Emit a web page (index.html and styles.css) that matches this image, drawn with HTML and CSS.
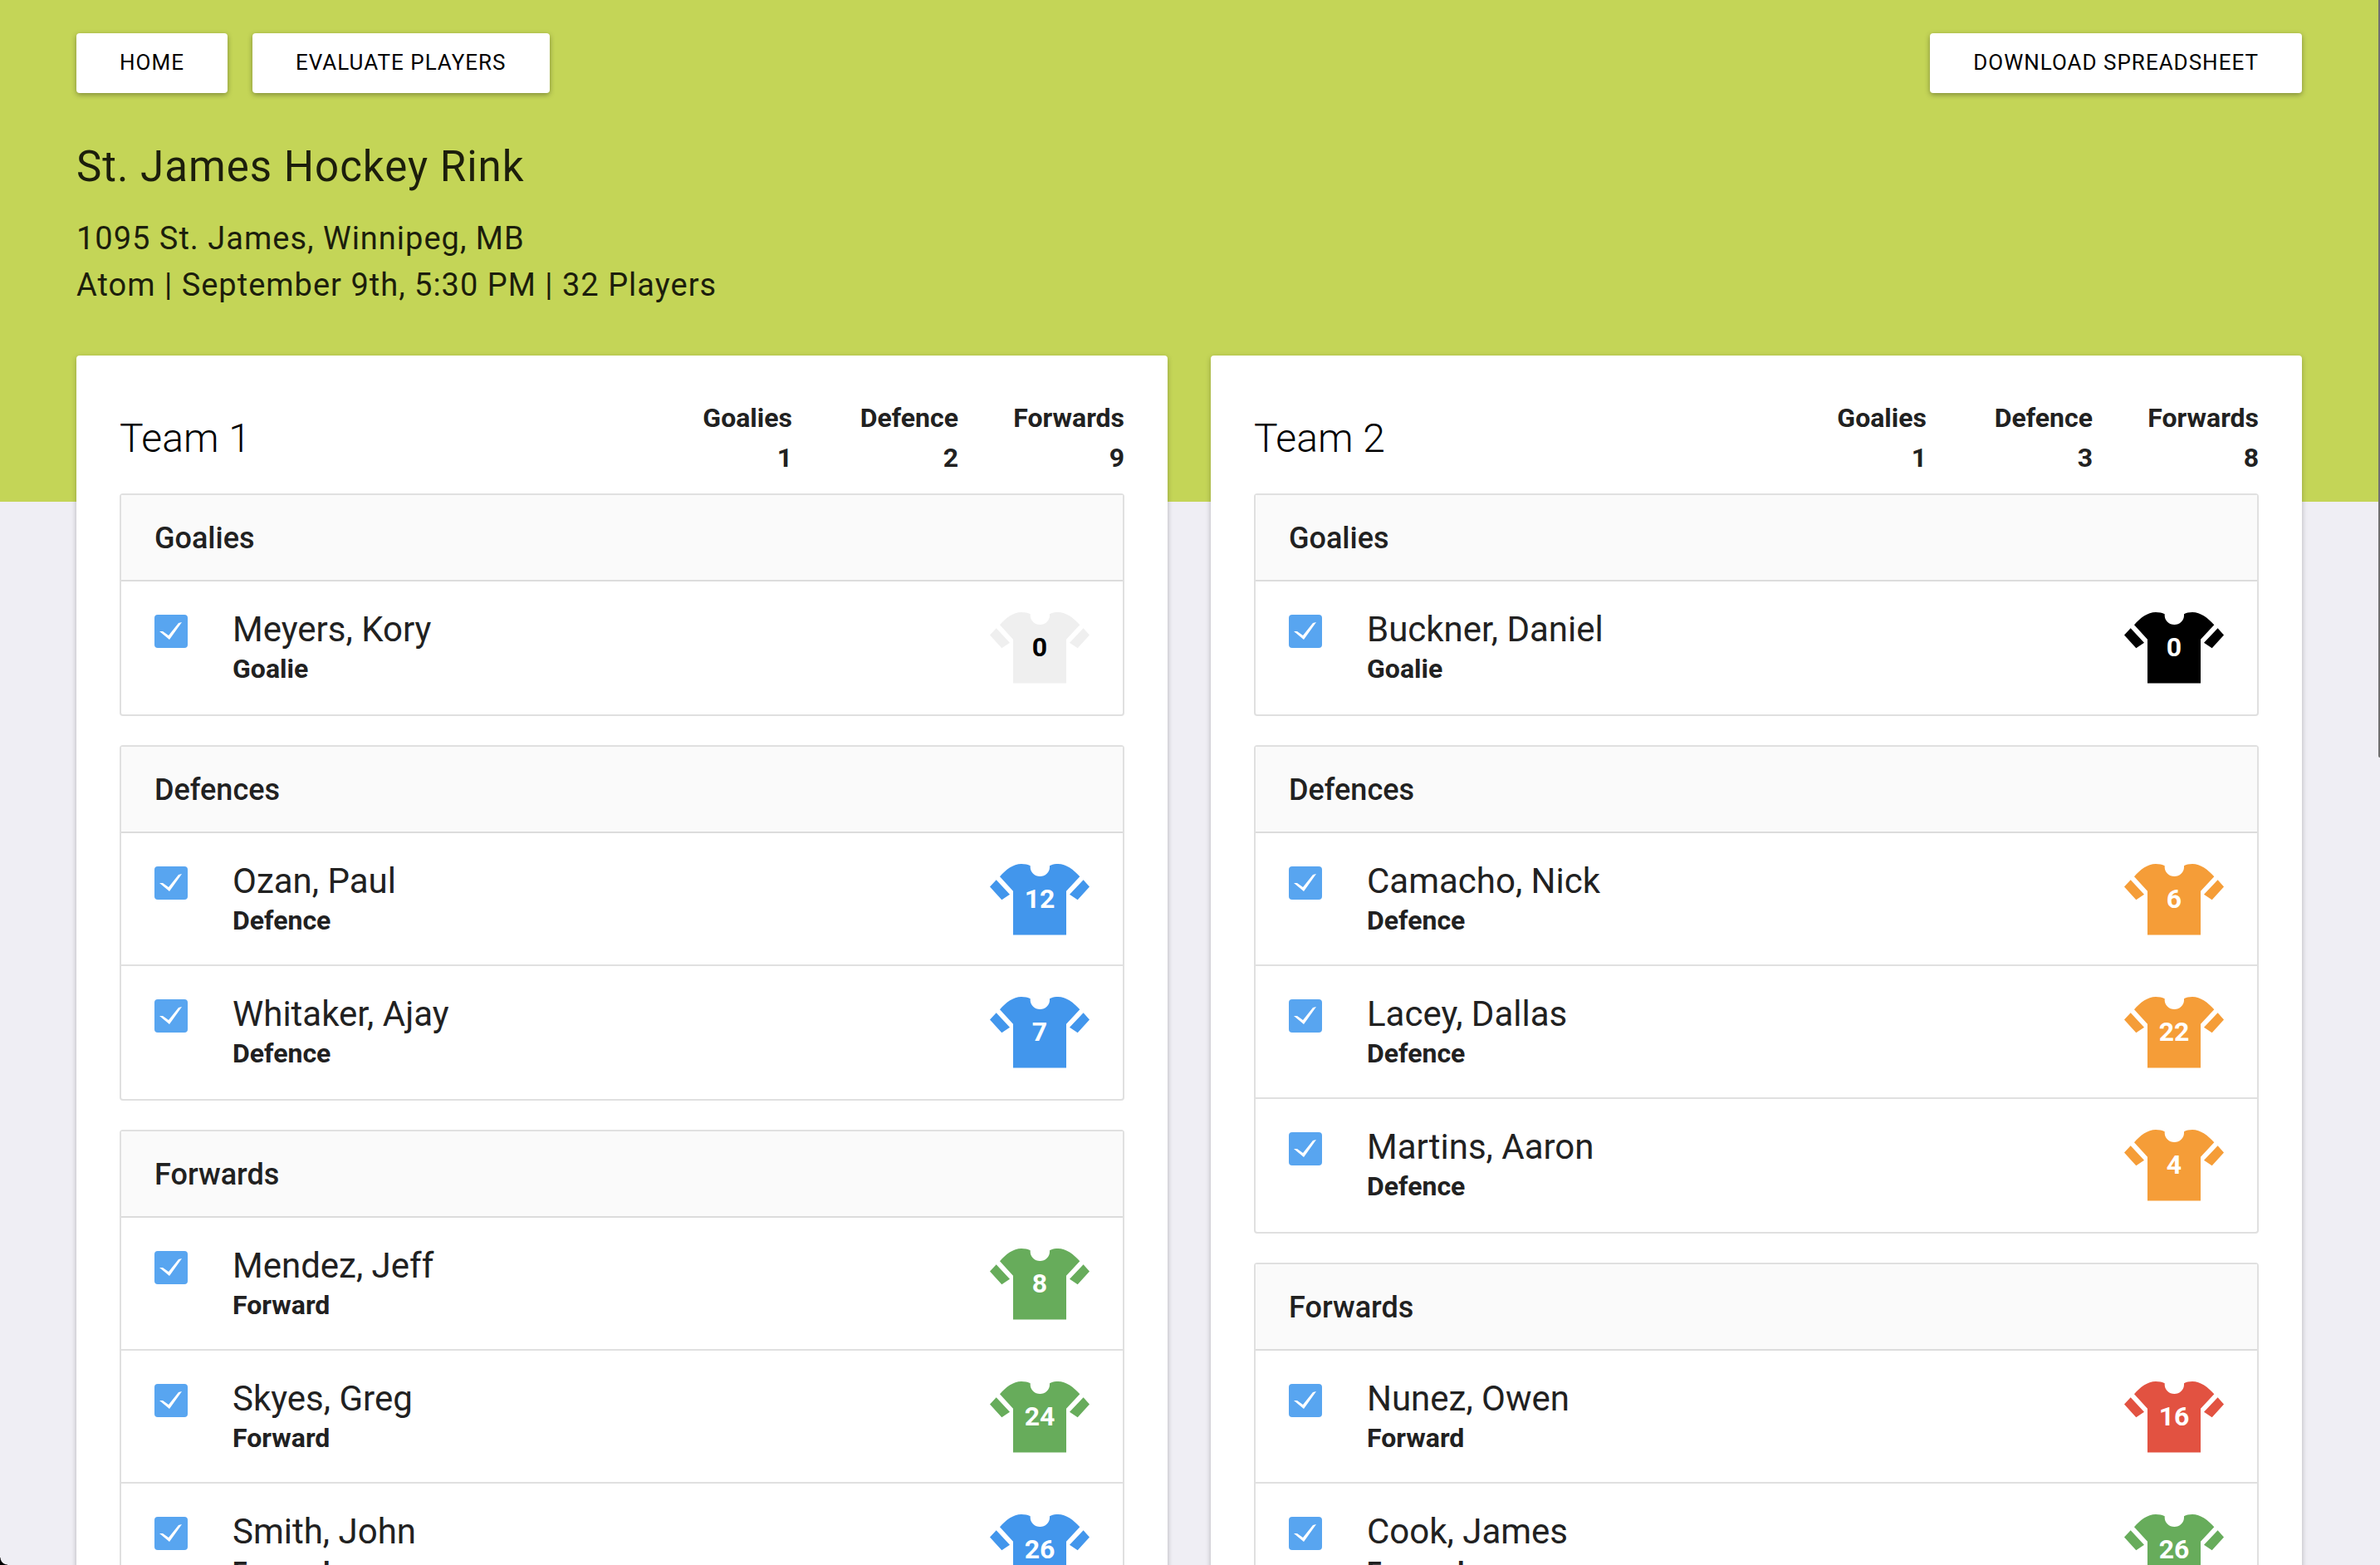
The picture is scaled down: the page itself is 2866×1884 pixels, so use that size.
FILE: index.html
```html
<!DOCTYPE html>
<html lang="en">
<head>
<meta charset="utf-8">
<title>St. James Hockey Rink</title>
<link rel="stylesheet" href="styles.css">
</head>
<body>
<svg class="sprite" aria-hidden="true">
  <symbol id="jersey" viewBox="0 0 120 86">
    <path d="M12 15.3C19 7 28 0 38 0c4 0 8 .8 10.700 2.300V4a11.300 10.700 0 0 0 23.300 0V2.300C74.500.8 78 0 82 0c10 0 19 7 26.300 15.300L92 32.700V85.500H28V32.700Z"/>
    <path d="M0 27.500 7.700 19.300 24 36.700 14.300 43.200ZM120 27.500 112.600 19.300 96 36.700 105.700 43.200Z"/>
  </symbol>
</svg>

<header class="hero">
  <nav class="toolbar">
    <button type="button" class="btn">HOME</button>
    <button type="button" class="btn">EVALUATE PLAYERS</button>
    <button type="button" class="btn btn-end">DOWNLOAD SPREADSHEET</button>
  </nav>
  <h1 class="venue">St. James Hockey Rink</h1>
  <p class="details">1095 St. James, Winnipeg, MB<br>Atom | September 9th, 5:30 PM | 32 Players</p>
</header>

<main class="teams">
  <section class="team">
    <div class="team-head">
      <h2 class="team-name">Team 1</h2>
      <dl class="counts">
        <div><dt>Goalies</dt><dd>1</dd></div>
        <div><dt>Defence</dt><dd>2</dd></div>
        <div><dt>Forwards</dt><dd>9</dd></div>
      </dl>
    </div>
    <section class="group">
      <h3 class="group-title">Goalies</h3>
      <label class="player"><input type="checkbox" class="check" checked><span class="who"><span class="name">Meyers, Kory</span><span class="role">Goalie</span></span><span class="jersey white"><svg aria-hidden="true"><use href="#jersey"/></svg><span class="number">0</span></span></label>
    </section>
    <section class="group">
      <h3 class="group-title">Defences</h3>
      <label class="player"><input type="checkbox" class="check" checked><span class="who"><span class="name">Ozan, Paul</span><span class="role">Defence</span></span><span class="jersey blue"><svg aria-hidden="true"><use href="#jersey"/></svg><span class="number">12</span></span></label>
      <label class="player"><input type="checkbox" class="check" checked><span class="who"><span class="name">Whitaker, Ajay</span><span class="role">Defence</span></span><span class="jersey blue"><svg aria-hidden="true"><use href="#jersey"/></svg><span class="number">7</span></span></label>
    </section>
    <section class="group">
      <h3 class="group-title">Forwards</h3>
      <label class="player"><input type="checkbox" class="check" checked><span class="who"><span class="name">Mendez, Jeff</span><span class="role">Forward</span></span><span class="jersey green"><svg aria-hidden="true"><use href="#jersey"/></svg><span class="number">8</span></span></label>
      <label class="player"><input type="checkbox" class="check" checked><span class="who"><span class="name">Skyes, Greg</span><span class="role">Forward</span></span><span class="jersey green"><svg aria-hidden="true"><use href="#jersey"/></svg><span class="number">24</span></span></label>
      <label class="player"><input type="checkbox" class="check" checked><span class="who"><span class="name">Smith, John</span><span class="role">Forward</span></span><span class="jersey blue"><svg aria-hidden="true"><use href="#jersey"/></svg><span class="number">26</span></span></label>
    </section>
  </section>

  <section class="team">
    <div class="team-head">
      <h2 class="team-name">Team 2</h2>
      <dl class="counts">
        <div><dt>Goalies</dt><dd>1</dd></div>
        <div><dt>Defence</dt><dd>3</dd></div>
        <div><dt>Forwards</dt><dd>8</dd></div>
      </dl>
    </div>
    <section class="group">
      <h3 class="group-title">Goalies</h3>
      <label class="player"><input type="checkbox" class="check" checked><span class="who"><span class="name">Buckner, Daniel</span><span class="role">Goalie</span></span><span class="jersey black"><svg aria-hidden="true"><use href="#jersey"/></svg><span class="number">0</span></span></label>
    </section>
    <section class="group">
      <h3 class="group-title">Defences</h3>
      <label class="player"><input type="checkbox" class="check" checked><span class="who"><span class="name">Camacho, Nick</span><span class="role">Defence</span></span><span class="jersey orange"><svg aria-hidden="true"><use href="#jersey"/></svg><span class="number">6</span></span></label>
      <label class="player"><input type="checkbox" class="check" checked><span class="who"><span class="name">Lacey, Dallas</span><span class="role">Defence</span></span><span class="jersey orange"><svg aria-hidden="true"><use href="#jersey"/></svg><span class="number">22</span></span></label>
      <label class="player"><input type="checkbox" class="check" checked><span class="who"><span class="name">Martins, Aaron</span><span class="role">Defence</span></span><span class="jersey orange"><svg aria-hidden="true"><use href="#jersey"/></svg><span class="number">4</span></span></label>
    </section>
    <section class="group">
      <h3 class="group-title">Forwards</h3>
      <label class="player"><input type="checkbox" class="check" checked><span class="who"><span class="name">Nunez, Owen</span><span class="role">Forward</span></span><span class="jersey red"><svg aria-hidden="true"><use href="#jersey"/></svg><span class="number">16</span></span></label>
      <label class="player"><input type="checkbox" class="check" checked><span class="who"><span class="name">Cook, James</span><span class="role">Forward</span></span><span class="jersey green"><svg aria-hidden="true"><use href="#jersey"/></svg><span class="number">26</span></span></label>
    </section>
  </section>
</main>
<div class="scroll-thumb"></div>
<div class="window-corner"></div>
</body>
</html>
```
FILE: styles.css
```css
* { box-sizing: border-box; margin: 0; padding: 0; }

body {
  height: 100vh;
  overflow: hidden;
  background: #efeef4;
  color: #212121;
  font-family: Roboto, "Liberation Sans", sans-serif;
}

.sprite { position: absolute; width: 0; height: 0; }

/* Header band; the team cards overlap its lower part */
.hero {
  padding: 40px 94px 233px 92px;
  background: #c4d557;
  color: #1c1e0c;
}

.toolbar { display: flex; gap: 30px; }

.btn {
  height: 72px;
  padding: 0 52px 2px;
  border: 0;
  border-radius: 4px;
  background: #fff;
  color: #000;
  font: 400 26px/32px Roboto, "Liberation Sans", sans-serif;
  letter-spacing: 1px;
  box-shadow: 0 2px 6px rgba(0, 0, 0, .35);
}

.btn-end { margin-left: auto; }

.venue {
  margin-top: 57px;
  font-size: 51px;
  font-weight: 400;
  line-height: 64px;
  letter-spacing: 1px;
}

.details {
  margin-top: 26px;
  font-size: 38px;
  line-height: 56px;
  letter-spacing: 1px;
}

.teams {
  display: grid;
  grid-template-columns: 1fr 1fr;
  gap: 52px;
  margin-top: -176px;
  padding: 0 94px 0 92px;
}

.team {
  padding: 51px 52px 52px;
  border-radius: 4px;
  background: #fff;
  box-shadow: 0 2px 6px rgba(0, 0, 0, .25);
}

.team-head {
  display: flex;
  justify-content: space-between;
  align-items: center;
  margin-bottom: 18px;
}

.team-name {
  color: #000;
  font-size: 48px;
  font-weight: 300;
  line-height: 56px;
}

.counts {
  display: grid;
  grid-template-columns: repeat(3, 200px);
  padding-bottom: 1px;
  font-size: 32px;
  font-weight: 700;
  line-height: 48px;
  text-align: right;
}

.group {
  border: 2px solid #e0e0e0;
  border-radius: 4px;
}

.group + .group { margin-top: 35px; }

.group-title {
  padding: 2px 40px 0;
  border-bottom: 2px solid #dcdcdc;
  background: #fafafa;
  font-size: 36px;
  font-weight: 500;
  line-height: 100px;
}

.player {
  display: flex;
  align-items: flex-start;
  height: 160px;
  padding: 34px 40px 0;
  border-bottom: 2px solid #e0e0e0;
}

.player:last-child { border-bottom-color: transparent; }

.check {
  appearance: none;
  width: 40px;
  height: 40px;
  margin: 6px 54px 0 0;
  border-radius: 4px;
  background: #58a5f0;
}

.check::before {
  content: "";
  display: block;
  width: 40px;
  height: 40px;
}

.check:checked::before {
  background: #fff;
  clip-path: polygon(6px 20px, 10px 20px, 17px 25px, 29px 10px, 33px 9px, 18px 30px);
}

.who { flex: 1; display: flex; flex-direction: column; }

.name { font-size: 42px; line-height: 48px; }

.role { font-size: 32px; font-weight: 700; line-height: 46px; }

/* The shirt and its number share one grid cell */
.jersey {
  display: grid;
  width: 120px;
  height: 86px;
  margin-top: 3px;
  place-items: center;
  color: #fff;
}

.jersey svg {
  grid-area: 1 / 1;
  width: 120px;
  height: 86px;
}

.number {
  grid-area: 1 / 1;
  z-index: 1;
  padding-bottom: 2px;
  font-size: 32px;
  font-weight: 700;
  line-height: 40px;
}

.white { fill: #efefef; color: #000; }
.black { fill: #000; }
.blue { fill: #4296ec; }
.orange { fill: #f59d38; }
.green { fill: #67ac5b; }
.red { fill: #e25241; }

.scroll-thumb {
  position: fixed;
  top: 0;
  right: 0;
  width: 2px;
  height: 912px;
  border-bottom-left-radius: 2px;
  background: #707070;
}

.window-corner {
  position: fixed;
  left: 0;
  bottom: 0;
  width: 9px;
  height: 9px;
  background: radial-gradient(circle at 100% 0, transparent 8px, #000 9px);
}
```
